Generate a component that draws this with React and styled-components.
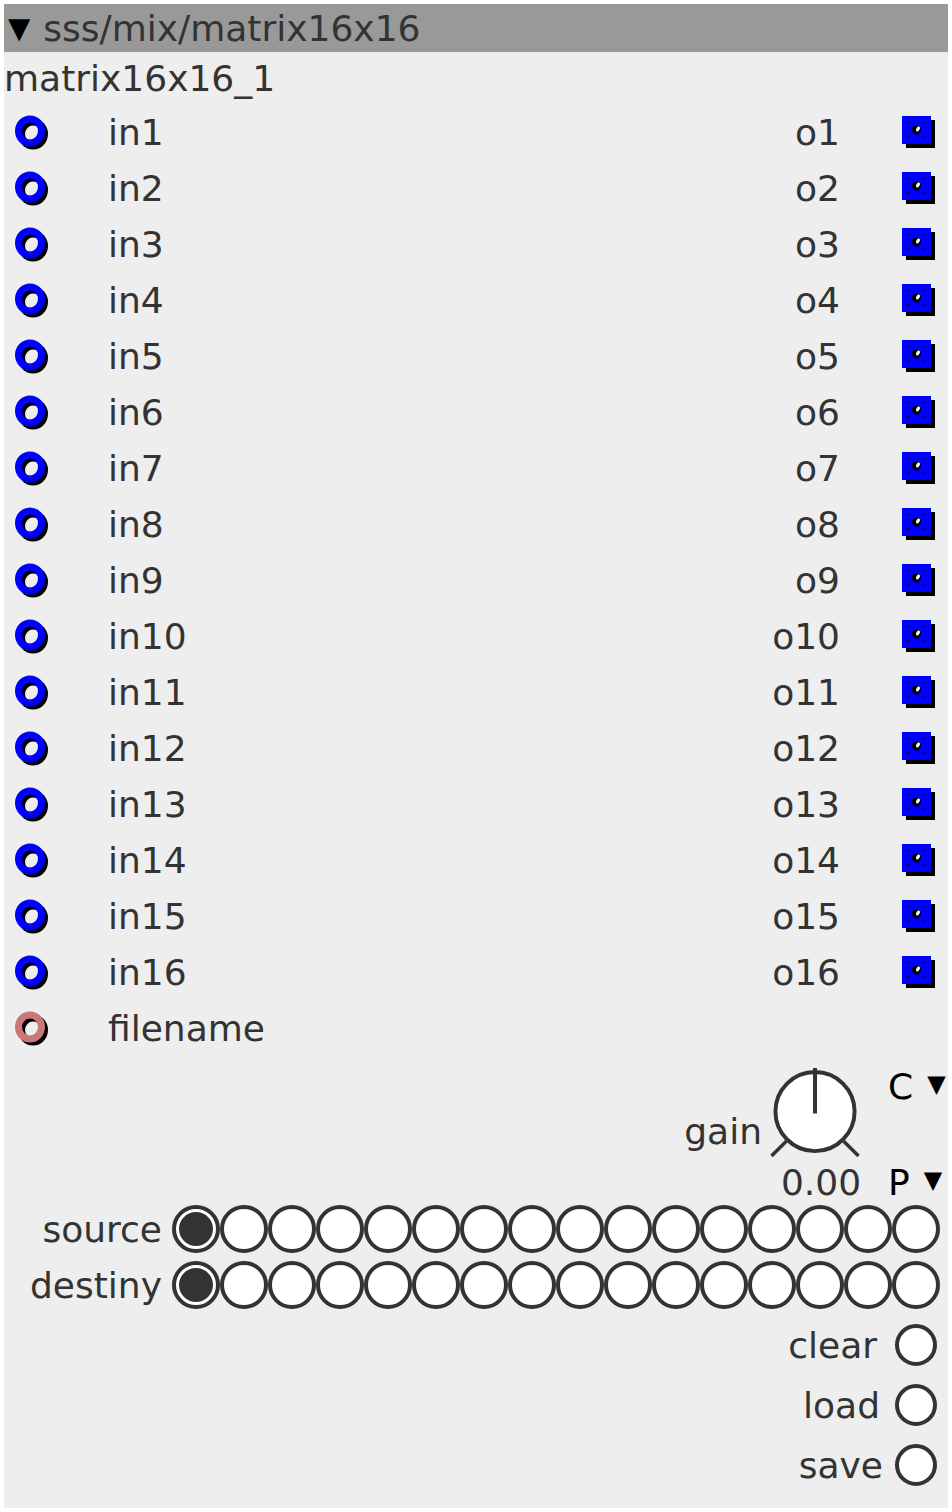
import React from "react";
import styled, { createGlobalStyle } from "styled-components";

const GlobalStyle = createGlobalStyle`
  html, body {
    margin: 0;
    padding: 0;
    background: #ffffff;
  }
  body {
    font-family: "DejaVu Sans", "Liberation Sans", sans-serif;
  }
`;

const Page = styled.div`
  padding: 4px;
  width: 952px;
  box-sizing: border-box;
`;

const Panel = styled.div`
  width: 944px;
  height: 1504px;
  background: #eeeeee;
  color: #333333;
  font-size: 36px;
  display: flex;
  flex-direction: column;
`;

const Header = styled.div`
  height: 48px;
  background: #999999;
  display: flex;
  align-items: center;
  padding-left: 4px;
  font-size: 36px;
  color: #333333;
  white-space: pre;
`;

const Arrow = styled.span`
  font-size: 29px;
  color: #000000;
  margin-right: 13px;
`;

const InstanceName = styled.div`
  height: 52px;
  display: flex;
  align-items: center;
  padding-left: 0;
`;

const IoRow = styled.div`
  height: 56px;
  display: flex;
  align-items: center;
`;

const InletSlot = styled.div`
  width: 94px;
  padding-left: 10px;
  display: flex;
  align-items: center;
`;

const IoLabel = styled.span`
  flex: 1;
  text-align: ${(p) => (p.$right ? "right" : "left")};
`;

const OutletSlot = styled.div`
  width: 108px;
  display: flex;
  justify-content: flex-end;
  padding-right: 12px;
  box-sizing: border-box;
`;

const GainBlock = styled.div`
  margin-top: 10px;
  height: 135px;
  display: flex;
  justify-content: flex-end;
  padding-right: 4px;
`;

const GainLabel = styled.span`
  align-self: flex-start;
  margin-top: 45px;
  margin-right: 6px;
  line-height: 42px;
`;

const KnobCol = styled.div`
  display: flex;
  flex-direction: column;
  align-items: center;
  width: 96px;
`;

const KnobValue = styled.span`
  margin-top: 4px;
  margin-left: 10px;
  line-height: 36px;
`;

const SelectCol = styled.div`
  display: flex;
  flex-direction: column;
  justify-content: space-between;
  padding-top: 3px;
  margin-left: 24px;
  width: 56px;
  color: #000000;
`;

const Select = styled.span`
  display: flex;
  align-items: flex-start;
  line-height: 36px;
  height: 36px;
`;

const SelArrow = styled.span`
  font-size: 24px;
  line-height: 24px;
  margin-left: 14px;
  margin-top: 3px;
`;

const RadioRow = styled.div`
  height: 56px;
  display: flex;
  align-items: center;
`;

const RadioLabel = styled.span`
  width: 158px;
  text-align: right;
  margin-right: 10px;
`;

const Radio = styled.div`
  width: 48px;
  height: 48px;
  border-radius: 50%;
  border: 4px solid #333333;
  background: #ffffff;
  box-sizing: border-box;
  display: flex;
  align-items: center;
  justify-content: center;

  &::after {
    content: "";
    display: ${(p) => (p.$on ? "block" : "none")};
    width: 34px;
    height: 34px;
    border-radius: 50%;
    background: #333333;
  }
`;

const ButtonList = styled.div`
  margin-top: 2px;
  display: flex;
  flex-direction: column;
`;

const ButtonRow = styled.div`
  height: 60px;
  display: flex;
  align-items: center;
  justify-content: flex-end;
  padding-right: 11px;
  gap: 18px;
`;

const ButtonLabel = styled.span`
  margin-right: ${(p) => p.$nudge}px;
`;

const Bang = styled.div`
  width: 42px;
  height: 42px;
  border-radius: 50%;
  border: 4px solid #333333;
  background: #ffffff;
  box-sizing: border-box;
`;

const Inlet = ({ color }) => (
  <svg width="40" height="40" viewBox="0 0 40 40">
    <ellipse cx="19" cy="22" rx="11.5" ry="12" fill="none" stroke="#000" strokeWidth="7" />
    <ellipse cx="16" cy="19" rx="11.5" ry="12" fill="none" stroke={color} strokeWidth="7" />
  </svg>
);

const Outlet = () => (
  <svg width="34" height="34" viewBox="0 0 34 34">
    <rect x="4" y="5" width="29" height="28" fill="#000" />
    <rect x="0" y="1" width="29" height="28" fill="#0000ff" />
    <circle cx="14.5" cy="15" r="4.5" fill="#000" />
    <ellipse cx="16" cy="14" rx="1.6" ry="2.6" fill="#fff" transform="rotate(35 16 14)" />
    <rect x="6" y="7" width="1.5" height="1.5" fill="#000" />
    <rect x="22" y="7" width="1.5" height="1.5" fill="#000" />
    <rect x="6" y="21" width="1.5" height="1.5" fill="#000" />
    <rect x="22" y="21" width="1.5" height="1.5" fill="#000" />
  </svg>
);

const Knob = () => (
  <svg width="96" height="96" viewBox="0 0 96 96">
    <line x1="3" y1="91" x2="18" y2="76" stroke="#333" strokeWidth="3.5" />
    <line x1="76" y1="76" x2="91" y2="91" stroke="#333" strokeWidth="3.5" />
    <circle cx="47" cy="46" r="40" fill="#fff" stroke="#333" strokeWidth="4" />
    <line x1="47" y1="2" x2="47" y2="48" stroke="#333" strokeWidth="4" />
  </svg>
);

const channels = Array.from({ length: 16 }, (_, i) => i + 1);

const buttons = [
  { name: "clear", nudge: 0 },
  { name: "load", nudge: -3 },
  { name: "save", nudge: -6 },
];

export default function App() {
  return (
    <Page>
      <GlobalStyle />
      <Panel>
        <Header>
          <Arrow>▼</Arrow>sss/mix/matrix16x16
        </Header>
        <InstanceName>matrix16x16_1</InstanceName>

        {channels.map((n) => (
          <IoRow key={n}>
            <InletSlot>
              <Inlet color="#0000ff" />
            </InletSlot>
            <IoLabel>in{n}</IoLabel>
            <IoLabel $right>o{n}</IoLabel>
            <OutletSlot>
              <Outlet />
            </OutletSlot>
          </IoRow>
        ))}
        <IoRow>
          <InletSlot>
            <Inlet color="#cc7777" />
          </InletSlot>
          <IoLabel>filename</IoLabel>
        </IoRow>

        <GainBlock>
          <GainLabel>gain</GainLabel>
          <KnobCol>
            <Knob />
            <KnobValue>0.00</KnobValue>
          </KnobCol>
          <SelectCol>
            <Select>
              C<SelArrow>▼</SelArrow>
            </Select>
            <Select>
              P<SelArrow>▼</SelArrow>
            </Select>
          </SelectCol>
        </GainBlock>

        {["source", "destiny"].map((name) => (
          <RadioRow key={name}>
            <RadioLabel>{name}</RadioLabel>
            {channels.map((n) => (
              <Radio key={n} $on={n === 1} />
            ))}
          </RadioRow>
        ))}

        <ButtonList>
          {buttons.map((b) => (
            <ButtonRow key={b.name}>
              <ButtonLabel $nudge={b.nudge}>{b.name}</ButtonLabel>
              <Bang />
            </ButtonRow>
          ))}
        </ButtonList>
      </Panel>
    </Page>
  );
}
